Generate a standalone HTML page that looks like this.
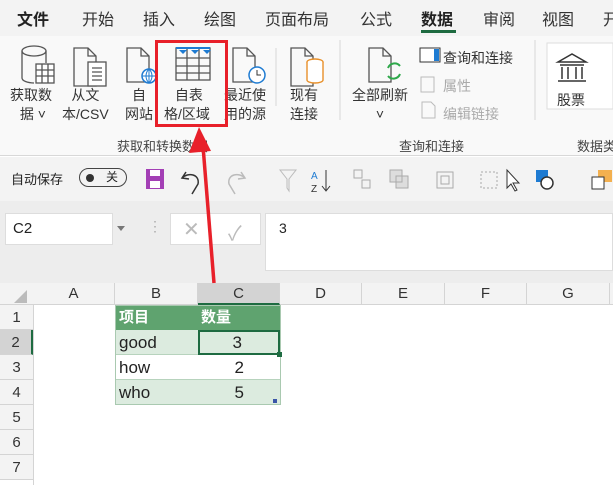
<!DOCTYPE html>
<html><head><meta charset="utf-8"><style>
*{margin:0;padding:0;box-sizing:border-box}
body{width:613px;height:485px;overflow:hidden;position:relative;background:#fff;font-family:"Liberation Sans","Noto Sans CJK SC",sans-serif;color:#222}
.a{position:absolute;white-space:nowrap}
.tab{top:6px;font-size:16px;color:#333}
.lbl{font-size:14px;color:#333;text-align:center;line-height:19px}
.gl{top:136px;font-size:13px;color:#444}
.col{position:absolute;top:283px;height:22px;font-size:15px;text-align:center;line-height:22px;border-right:1px solid #d4d4d4;color:#333}
.row{position:absolute;left:0;width:33px;height:25px;font-size:15px;text-align:center;line-height:25px;border-bottom:1px solid #d4d4d4;color:#333;background:#f3f3f3}
.cell{position:absolute;height:25px;font-size:17px;line-height:25px;padding:0 4px}
</style></head><body>
<div class="a" style="left:0;top:0;width:613px;height:36px;background:#f3f3f3"></div>
<div class="a" style="left:0;top:36px;width:613px;height:120px;background:#f9f9f9;border-bottom:1px solid #d8d8d8"></div>
<div class="a tab" style="left:17px;font-weight:bold;color:#222">文件</div>
<div class="a tab" style="left:82px">开始</div>
<div class="a tab" style="left:143px">插入</div>
<div class="a tab" style="left:204px">绘图</div>
<div class="a tab" style="left:265px">页面布局</div>
<div class="a tab" style="left:360px">公式</div>
<div class="a tab" style="left:421px;font-weight:bold;color:#222">数据</div>
<div class="a" style="left:421px;top:30px;width:35px;height:3px;background:#1e6b41"></div>
<div class="a tab" style="left:483px">审阅</div>
<div class="a tab" style="left:542px">视图</div>
<div class="a tab" style="left:603px">开</div>

<svg class="a" style="left:0;top:40px" width="613" height="80">
<g fill="none" stroke="#555" stroke-width="1.3">
<ellipse cx="34" cy="11" rx="12" ry="5"/><path d="M22 11v27a12 5 0 0 0 12 5"/><path d="M46 11v12"/>
<rect x="36" y="24" width="18" height="19" fill="#fff"/><path d="M36 30h18M36 36h18M42 24v19M48 24v19"/>
<path d="M74 8h14l8 8v30H74z"/><path d="M88 8v8h8"/><rect x="88" y="22" width="18" height="24" fill="#fff"/><path d="M92 28h10M92 32h10M92 36h10M92 40h10"/>
<path d="M127 8h14l8 8v26h-22z"/><path d="M141 8v8h8"/>
<rect x="176" y="8" width="34" height="32"/><path d="M176 18h34M176 26h34M176 33h34M187 8v32M199 8v32"/>
<path d="M233 8h14l8 8v26h-22z"/><path d="M247 8v8h8"/>
<path d="M291 8h14l8 8v30h-22z"/><path d="M305 8v8h8"/>
<path d="M369 8h14l8 8v26h-22z"/><path d="M383 8v8h8"/>
</g>
<circle cx="149" cy="36" r="7" fill="#fff" stroke="#1e7bd2" stroke-width="1.5"/><path d="M142 36h14M149 29v14M149 29c-4 4-4 10 0 14M149 29c4 4 4 10 0 14" stroke="#1e7bd2" fill="none"/>
<path d="M179 10l4 4 4-4zM191 10l4 4 4-4zM203 10l4 4 4-4z" fill="#1e7bd2"/><rect x="176" y="7" width="34" height="2" fill="#1e7bd2"/>
<circle cx="257" cy="35" r="8" fill="#fff" stroke="#1e7bd2" stroke-width="1.5"/><path d="M257 30v5h4" stroke="#333" fill="none"/>
<ellipse cx="315" cy="22" rx="8" ry="3" fill="#fff" stroke="#e8902a" stroke-width="1.4"/><path d="M307 22v18a8 3 0 0 0 16 0V22" fill="#fff" stroke="#e8902a" stroke-width="1.4"/>
<path d="M388 28a7 7 0 0 1 12-2M400 34a7 7 0 0 1-12 2" stroke="#2ea84a" stroke-width="2" fill="none"/>
<rect x="420" y="8" width="20" height="14" fill="#fff" stroke="#333"/><rect x="434" y="9" width="5" height="12" fill="#1e7bd2"/>
<rect x="421" y="37" width="13" height="15" fill="none" stroke="#bbb"/>
<path d="M422 62h9l4 4v12h-13z" fill="none" stroke="#bbb"/>
<rect x="547" y="3" width="66" height="66" fill="#fff" stroke="#ddd"/>
<path d="M558 22l14-8 14 8zM560 25h24M562 27v12M568 27v12M576 27v12M582 27v12M558 41h28" stroke="#333" stroke-width="1.5" fill="none"/>
<path d="M340 0v100M535 0v100M276 8v58" stroke="#d8d8d8"/>
</svg>
<div class="a lbl" style="left:10px;top:86px">获取数<br>&nbsp;据 ˅</div>
<div class="a lbl" style="left:62px;top:86px">从文<br>本/CSV</div>
<div class="a lbl" style="left:125px;top:86px;text-align:center">自<br>网站</div>
<div class="a lbl" style="left:164px;top:86px">&nbsp;自表<br>格/区域</div>
<div class="a lbl" style="left:224px;top:86px">最近使<br>用的源</div>
<div class="a lbl" style="left:290px;top:86px">现有<br>连接</div>
<div class="a lbl" style="left:352px;top:86px">全部刷新<br>˅</div>
<div class="a" style="left:443px;top:48px;font-size:14px;color:#333">查询和连接</div>
<div class="a" style="left:443px;top:76px;font-size:14px;color:#aaa">属性</div>
<div class="a" style="left:443px;top:104px;font-size:14px;color:#aaa">编辑链接</div>
<div class="a" style="left:557px;top:90px;font-size:14px;color:#333">股票</div>
<div class="a gl" style="left:117px">获取和转换数据</div>
<div class="a gl" style="left:399px">查询和连接</div>
<div class="a gl" style="left:577px">数据类</div>

<div class="a" style="left:0;top:157px;width:613px;height:44px;background:#f3f3f3"></div>
<div class="a" style="left:11px;top:169px;font-size:13px">自动保存</div>
<div class="a" style="left:79px;top:168px;width:48px;height:19px;border:1px solid #444;border-radius:10px;font-size:12px;line-height:17px;padding-left:26px">关</div>
<div class="a" style="left:86px;top:174px;width:8px;height:8px;border-radius:50%;background:#333"></div>
<svg class="a" style="left:140px;top:162px" width="473" height="34">
<rect x="6" y="7" width="18" height="20" fill="#a33fb5"/><rect x="10" y="8" width="10" height="6" fill="#fff"/><rect x="10" y="19" width="10" height="7" fill="#fff"/>
<path d="M46 10l-4 6 7 1M42 16c6-6 18-4 16 6l-6 10" stroke="#333" stroke-width="1.5" fill="none"/>
<path d="M101 10l4 6-7 1M105 16c-6-6-18-4-16 6l6 10" stroke="#bbb" stroke-width="1.5" fill="none"/>
<path d="M140 8h16l-7 9v12l-2-3V17z" stroke="#bbb" fill="none"/>
<text x="171" y="17" font-size="10" fill="#1e7bd2" font-family="Liberation Sans">A</text><text x="171" y="30" font-size="10" fill="#333" font-family="Liberation Sans">Z</text><path d="M186 8v20M182 24l4 5 4-5" stroke="#333" fill="none"/>
<path d="M214 8h8v8h-8zM222 18h8v8h-8z" stroke="#aaa" fill="none"/>
<path d="M250 8h12v12h-12zM256 14h12v12h-12z" stroke="#aaa" fill="#ddd"/>
<path d="M297 10h16v16h-16zM301 14h8v8h-8z" stroke="#aaa" fill="none"/>
<path d="M341 10h16v16h-16z" stroke="#aaa" stroke-dasharray="2 2" fill="none"/>
<path d="M367 8v18l4-4 4 7 2-1-4-7h6z" stroke="#333" fill="#fff"/>
<rect x="396" y="8" width="12" height="12" fill="#1e7bd2"/><circle cx="407" cy="21" r="6" fill="#fff" stroke="#333" stroke-width="1.5"/>
<rect x="458" y="8" width="14" height="12" fill="#f3b04f"/><rect x="452" y="15" width="12" height="12" fill="#fff" stroke="#333"/>
</svg>

<div class="a" style="left:0;top:201px;width:613px;height:82px;background:#ededed"></div>
<div class="a" style="left:5px;top:213px;width:108px;height:32px;background:#fff;border:1px solid #ddd;font-size:15px;line-height:30px;padding-left:7px">C2</div>
<div class="a" style="left:117px;top:226px;border:4px solid transparent;border-top:5px solid #777"></div>
<div class="a" style="left:148px;top:218px;font-size:14px;color:#aaa">⋮</div>
<div class="a" style="left:170px;top:213px;width:91px;height:32px;background:#fff;border:1px solid #ddd"></div>
<div class="a" style="left:183px;top:217px;font-size:20px;color:#bbb">✕</div>
<div class="a" style="left:228px;top:217px;font-size:20px;color:#bbb">✓</div>
<div class="a" style="left:273px;top:216px;font-size:17px;font-style:italic;font-family:'Liberation Serif',serif;color:#555">fx</div>
<div class="a" style="left:265px;top:213px;width:348px;height:58px;background:#fff;border:1px solid #ddd;font-size:14px;padding:6px 0 0 13px">3</div>

<div class="a" style="left:0;top:283px;width:613px;height:22px;background:#f3f3f3;border-bottom:1px solid #d4d4d4"></div>
<svg class="a" style="left:14px;top:290px" width="14" height="14"><path d="M13 0v13H0z" fill="#bbb"/></svg>
<div class="col" style="left:33px;width:82px">A</div>
<div class="col" style="left:115px;width:83px">B</div>
<div class="col" style="left:198px;width:82px;background:#d3d3d3;border-bottom:2px solid #1e6b41">C</div>
<div class="col" style="left:280px;width:82px">D</div>
<div class="col" style="left:362px;width:83px">E</div>
<div class="col" style="left:445px;width:82px">F</div>
<div class="col" style="left:527px;width:83px">G</div>
<div class="a" style="left:33px;top:305px;width:1px;height:180px;background:#d4d4d4"></div>
<div class="row" style="top:305px">1</div>
<div class="row" style="top:330px;background:#d3d3d3;border-right:2px solid #1e6b41">2</div>
<div class="row" style="top:355px">3</div>
<div class="row" style="top:380px">4</div>
<div class="row" style="top:405px">5</div>
<div class="row" style="top:430px">6</div>
<div class="row" style="top:455px">7</div>

<div class="cell" style="left:115px;top:305px;width:165px;background:#5fa36f;color:#fff;font-weight:bold;font-size:15px">项目</div>
<div class="a" style="left:201px;top:305px;color:#fff;font-weight:bold;font-size:15px;line-height:25px">数量</div>
<div class="cell" style="left:115px;top:330px;width:165px;background:#dcebdf;border-bottom:1px solid #b7d3bd">good</div>
<div class="cell" style="left:115px;top:355px;width:165px;background:#fff;border-bottom:1px solid #b7d3bd">how</div>
<div class="cell" style="left:115px;top:380px;width:165px;background:#dcebdf">who</div>
<div class="a" style="left:115px;top:305px;width:166px;height:100px;border:1px solid #a9c9b0"></div>
<div class="cell" style="left:198px;top:330px;width:82px;text-align:right;padding-right:36px;border:2px solid #1e6b41;line-height:21px">3</div>
<div class="a" style="left:277px;top:352px;width:5px;height:5px;background:#1e6b41"></div>
<div class="cell" style="left:198px;top:355px;width:82px;text-align:right;padding-right:36px">2</div>
<div class="cell" style="left:198px;top:380px;width:82px;text-align:right;padding-right:36px">5</div>
<div class="a" style="left:273px;top:399px;width:4px;height:4px;background:#3a55a8"></div>

<div class="a" style="left:155px;top:40px;width:73px;height:87px;border:3px solid #e8202a"></div>
<svg class="a" style="left:0;top:0" width="613" height="485">
<path d="M214 283L203 146" stroke="#e8202a" stroke-width="3.5"/>
<path d="M199 127l-10 26 22-2z" fill="#e8202a"/>
</svg>
</body></html>
